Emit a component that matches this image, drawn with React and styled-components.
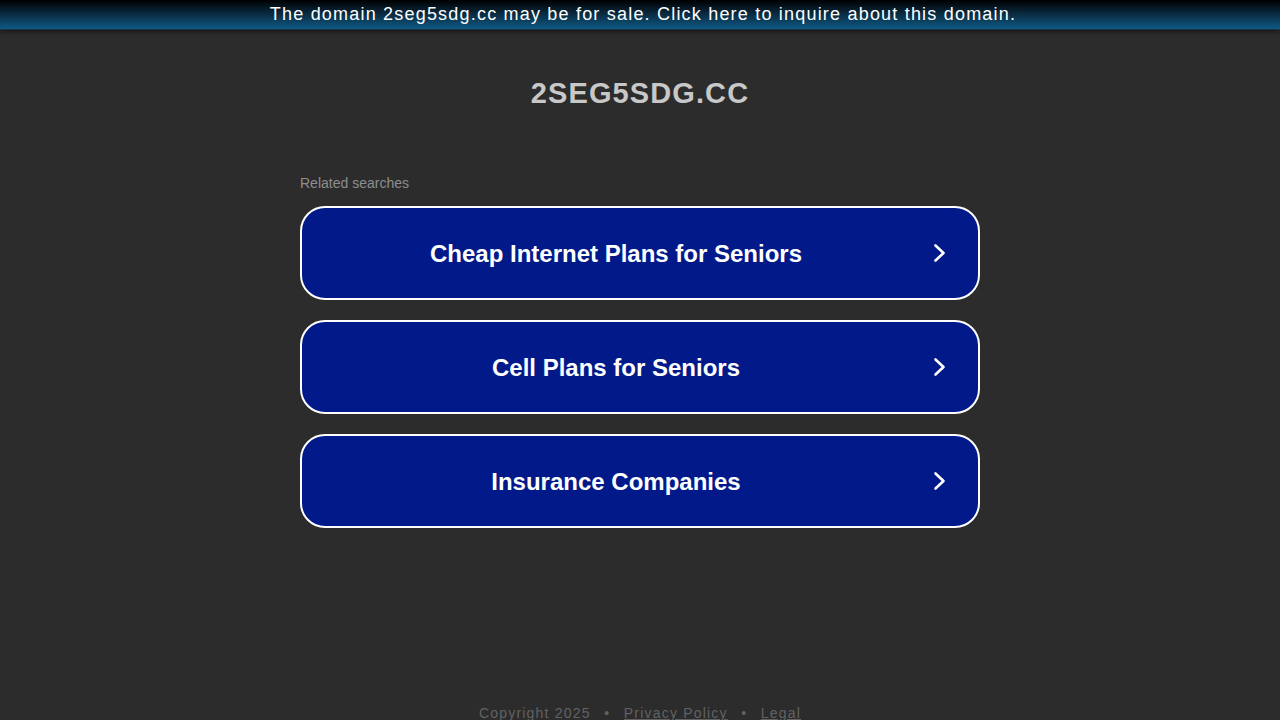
import React from "react";
import styled, { createGlobalStyle } from "styled-components";

const searches = [
  "Cheap Internet Plans for Seniors",
  "Cell Plans for Seniors",
  "Insurance Companies",
];

const GlobalStyle = createGlobalStyle`
  html, body {
    margin: 0;
    padding: 0;
    background: #2c2c2c;
    font-family: "Liberation Sans", Arial, sans-serif;
  }
`;

const Page = styled.div`
  min-height: 720px;
  display: flex;
  flex-direction: column;
  align-items: center;
`;

const TopBar = styled.div`
  box-sizing: border-box;
  width: 100%;
  height: 30px;
  padding-left: 6px;
  background: linear-gradient(to bottom, #000 0%, #0a2d44 50%, #0d5780 97%);
  border-bottom: 1px solid #1b3444;
  box-shadow: 0 2px 4px rgba(0, 0, 0, 0.45);
  color: #fff;
  font-size: 18px;
  letter-spacing: 1.2px;
  text-align: center;
  line-height: 28px;
`;

const Title = styled.h1`
  margin: 45px 0 0;
  font-size: 29px;
  font-weight: bold;
  letter-spacing: 1.1px;
  color: #c8c8c8;
  line-height: 36px;
`;

const Content = styled.div`
  width: 680px;
  margin-top: 64px;
  display: flex;
  flex-direction: column;
  gap: 20px;
`;

const Label = styled.div`
  font-size: 14px;
  color: #8e8e8e;
  margin-bottom: -5px;
  line-height: 16px;
`;

const SearchButton = styled.a`
  box-sizing: border-box;
  height: 94px;
  border: 2px solid #fff;
  border-radius: 25px;
  background: #021a89;
  display: flex;
  align-items: center;
  padding: 0 30px 0 2px;
  color: #fff;
  text-decoration: none;
  cursor: pointer;
`;

const ButtonText = styled.span`
  flex: 1;
  text-align: center;
  font-size: 24px;
  font-weight: bold;
  padding-top: 2px;
`;

const Footer = styled.div`
  margin-top: auto;
  font-size: 14px;
  letter-spacing: 1.2px;
  color: #626262;
  line-height: 16px;
  height: 15px;
  overflow: visible;
`;

const FooterLink = styled.a`
  color: #626262;
  text-decoration: underline;
`;

const Dot = styled.span`
  margin: 0 13.5px;
`;

const Chevron = () => (
  <svg width="20" height="20" viewBox="0 0 20 20" fill="none">
    <path
      d="M7.5 2.5 L15.5 10 L7.5 17.5"
      stroke="#fff"
      strokeWidth="2.6"
      strokeLinecap="round"
      strokeLinejoin="round"
    />
  </svg>
);

export default function App() {
  return (
    <>
      <GlobalStyle />
      <Page>
        <TopBar>
          The domain 2seg5sdg.cc may be for sale. Click here to inquire about
          this domain.
        </TopBar>
        <Title>2SEG5SDG.CC</Title>
        <Content>
          <Label>Related searches</Label>
          {searches.map((s) => (
            <SearchButton key={s}>
              <ButtonText>{s}</ButtonText>
              <Chevron />
            </SearchButton>
          ))}
        </Content>
        <Footer>
          Copyright 2025<Dot>•</Dot>
          <FooterLink>Privacy Policy</FooterLink>
          <Dot>•</Dot>
          <FooterLink>Legal</FooterLink>
        </Footer>
      </Page>
    </>
  );
}
